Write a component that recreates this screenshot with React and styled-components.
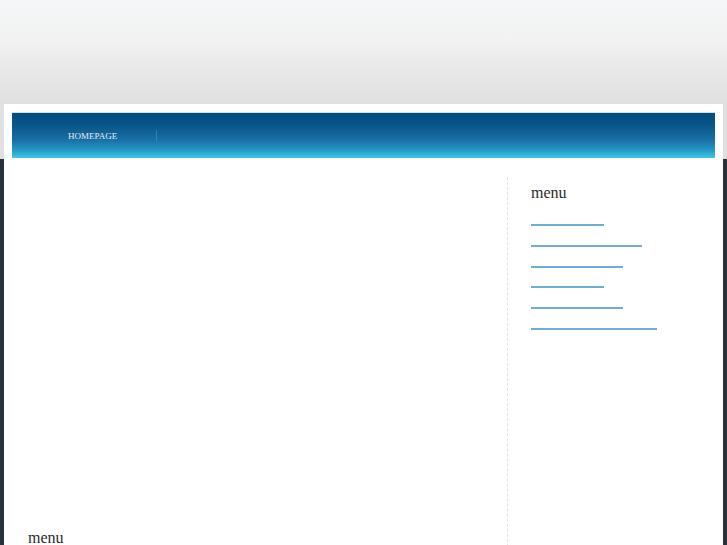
import React from 'react';
import styled, { createGlobalStyle } from 'styled-components';

const GlobalStyle = createGlobalStyle`
  html, body {
    margin: 0;
    padding: 0;
  }
  body {
    font-family: "Liberation Serif", "Times New Roman", serif;
    background:
      linear-gradient(#f3f7f8 0px, #f4f5f5 14px, #f2f2f2 40px, #e8e8e8 70px, #e0e0e0 104px, #e0e0e0 159px) top / 100% 159px no-repeat,
      #27313b;
    min-height: 100vh;
  }
`;

const Wrapper = styled.div`
  margin: 104px 4px 0;
  padding: 8px;
  background: #ffffff;
  min-height: 600px;
`;

const NavBar = styled.nav`
  height: 46px;
  display: flex;
  align-items: center;
  background: linear-gradient(#054b7e 0%, #0a5688 28%, #1a72a8 62%, #2797c6 82%, #3ec8e6 100%);
  border-top: 1px solid #cfe3ee;
  box-sizing: border-box;
`;

const NavItem = styled.a`
  padding: 0 39px 0 56px;
  font-size: 9px;
  color: #e2edf4;
  text-decoration: none;
  text-transform: uppercase;
  line-height: 12px;
  margin-top: 1px;
`;

const NavDivider = styled.span`
  width: 1px;
  height: 12px;
  background: #2b86bb;
`;

const Content = styled.div`
  display: flex;
  padding-top: 19px;
`;

const Main = styled.main`
  width: 495px;
  padding-left: 16px;
  box-sizing: border-box;
`;

const Placeholder = styled.div`
  height: 351px;
`;

const Heading = styled.h3`
  margin: ${p => p.$top || 0}px 0 0;
  font-size: 16px;
  font-weight: normal;
  line-height: 20px;
  color: #2a2a2a;
`;

const Sidebar = styled.aside`
  flex: 1;
  border-left: 1px dashed #e2e2e2;
  padding-left: 23px;
  min-height: 400px;
`;

const LinkList = styled.ul`
  list-style: none;
  margin: 6px 0 0;
  padding: 0;
`;

const LinkItem = styled.li`
  height: 20.8px;
`;

const LinkLine = styled.a`
  display: inline-block;
  width: ${p => p.$w}px;
  height: 15px;
  border-bottom: 2px solid #72acd4;
`;

const links = [73, 111, 92, 73, 92, 126];

export default function App() {
  return (
    <>
      <GlobalStyle />
      <Wrapper>
        <NavBar>
          <NavItem href="#">Homepage</NavItem>
          <NavDivider />
        </NavBar>
        <Content>
          <Main>
            <Placeholder />
            <Heading>menu</Heading>
          </Main>
          <Sidebar>
            <Heading $top={6}>menu</Heading>
            <LinkList>
              {links.map((w, i) => (
                <LinkItem key={i}>
                  <LinkLine href="#" $w={w} />
                </LinkItem>
              ))}
            </LinkList>
          </Sidebar>
        </Content>
      </Wrapper>
    </>
  );
}
